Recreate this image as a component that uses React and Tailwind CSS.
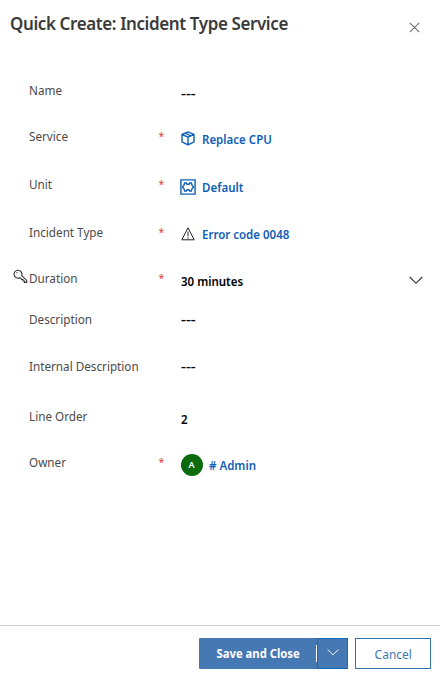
function CubeIcon() {
  return (
    <svg width="14" height="15" viewBox="0 0 14 15" fill="none" stroke="#1160b7" strokeWidth="1.4" strokeLinejoin="round">
      <path d="M7 .9 13 3.3V10.8L7 13.9 1 10.8V3.3ZM1.2 3.5 7 6.2 12.8 3.5M7 6.2V13.6M4.1 2.2 9.9 4.8" />
    </svg>
  );
}

function UnitIcon() {
  return (
    <svg width="16" height="16" viewBox="0 0 16 16" fill="none" stroke="#1160b7" strokeWidth="1.4">
      <path d="M.9.9H15.1V15.1H.9Z" />
      <path d="M4.6 4H6.4L7 5.2H9L9.6 4H11.4L12 6.2 13.6 8 12 9.8 11.4 12H9.6L9 10.8H7L6.4 12H4.6L4 9.8 2.4 8 4 6.2Z" />
    </svg>
  );
}

function WarningIcon() {
  return (
    <svg width="14" height="14" viewBox="0 0 14 14" fill="none" stroke="#222222" strokeWidth="1">
      <path d="M7 .8 13.2 12.8H.8ZM7 4.6V9.4M7 10.4V11.6" />
    </svg>
  );
}

function KeyIcon() {
  return (
    <svg width="15" height="15" viewBox="0 0 15 15" fill="none" stroke="#333333" strokeWidth="1.1">
      <path d="M8.7 6.7 13.7 11.4V13.4H11.5V12H10V10.5H8.6L6.9 8.7A4 4 0 1 1 8.7 6.7Z" />
      <path d="M3.3 3.7H4.5" />
    </svg>
  );
}

function Chevron({ className }) {
  return (
    <svg className={className} width="14" height="9" viewBox="0 0 14 9" fill="none" stroke="currentColor" strokeWidth="1.1">
      <path d="M.8 1 7 7.3 13.2 1" />
    </svg>
  );
}

function Row({ label, height, required, icon, valueClass, children }) {
  return (
    <div className={`flex items-start ${height}`}>
      <div className="flex w-[29px] shrink-0 justify-end pt-[3px] pr-px">{icon}</div>
      <div className="w-[129.5px] shrink-0 text-[13px] leading-6 whitespace-nowrap text-[#4a4a4a]">
        <span className="inline-block origin-left scale-x-90">{label}</span>
      </div>
      <div className="w-[22px] shrink-0 text-[10.5px] leading-6 text-[#e5383c]">{required ? "*" : ""}</div>
      <div className={`flex h-6 flex-1 items-center text-[12.5px] leading-6 font-semibold whitespace-nowrap ${valueClass}`}>{children}</div>
    </div>
  );
}

function Text({ className = "", children }) {
  return <span className={`inline-block origin-left scale-x-[0.92] ${className}`}>{children}</span>;
}

function Empty() {
  return <span className="inline-block origin-left scale-x-[1.22] font-semibold">---</span>;
}

export default function App() {
  return (
    <div className="flex h-[675px] w-[440px] flex-col overflow-hidden bg-white font-['Segoe_UI','Noto_Sans',sans-serif]">
      <header className="flex h-[78px] shrink-0 items-start justify-between pr-[20px] pl-[10px]">
        <h1 className="mt-[9px] origin-left scale-x-[0.942] text-[18px] leading-[28px] font-semibold tracking-[-0.4px] whitespace-nowrap text-[#3b3b3b]">
          Quick Create: Incident Type Service
        </h1>
        <svg className="mt-[22px]" width="11" height="11" viewBox="0 0 11 11" stroke="#707070" strokeWidth="1.1">
          <path d="M.8.8 10.2 10.2M10.2.8.8 10.2" />
        </svg>
      </header>
      <main className="flex-1">
        <Row label="Name" height="h-[46px]" valueClass="mt-[4px] text-black"><Empty /></Row>
        <Row label="Service" height="h-[48px]" required valueClass="mt-[4px] text-[#1160b7]">
          <span className="-mt-[3px]"><CubeIcon /></span><Text className="ml-[7.5px]">Replace CPU</Text>
        </Row>
        <Row label="Unit" height="h-[48px]" required valueClass="mt-[4px] text-[#1160b7]">
          <span className="-mt-[3px] -ml-px"><UnitIcon /></span><Text className="ml-[6.5px]">Default</Text>
        </Row>
        <Row label="Incident Type" height="h-[46px]" required valueClass="mt-[3px] text-[#1160b7]">
          <span className="-mt-[2px]"><WarningIcon /></span><Text className="ml-[7.5px]">Error code 0048</Text>
        </Row>
        <Row label="Duration" height="h-[41px]" required icon={<KeyIcon />} valueClass="mt-[4px] text-black">
          <Text>30 minutes</Text><Chevron className="-mt-[3px] mr-[17px] ml-auto text-[#333333]" />
        </Row>
        <Row label="Description" height="h-[47px]" valueClass="mt-px text-black"><Empty /></Row>
        <Row label="Internal Description" height="h-[50px]" valueClass="mt-px text-black"><Empty /></Row>
        <Row label="Line Order" height="h-[46px]" valueClass="mt-[4px] text-black"><Text>2</Text></Row>
        <Row label="Owner" height="h-[46px]" required valueClass="mt-[4px] text-[#1160b7]">
          <span className="-mt-[2px] flex h-[22px] w-[22px] items-center justify-center rounded-full bg-[#0b6a0b] text-[9px] text-white">A</span>
          <Text className="ml-[6px]"># Admin</Text>
        </Row>
      </main>
      <footer className="flex h-[50px] shrink-0 items-start justify-end border-t border-[#d2d0ce] pt-[12px] pr-[9px]">
        <button className="flex h-[31px] w-[118px] items-center justify-center rounded-l-[1px] bg-[#4678b4] pt-px text-[12.5px] font-bold text-white">
          <span className="inline-block scale-x-[0.9] whitespace-nowrap">Save and Close</span>
        </button>
        <button className="relative flex h-[31px] w-[31px] items-center justify-center border border-[#0f6cbd] bg-[#4678b4] text-white">
          <span className="absolute top-[6px] -left-[2px] h-[17px] w-px bg-white" />
          <Chevron className="-mt-[3px] w-[12px]" />
        </button>
        <button className="ml-[7px] h-[31px] w-[76px] border border-[#3373b3] bg-white pt-[2px] text-[13px] text-[#3c76b2]">
          <span className="inline-block scale-x-[0.92]">Cancel</span>
        </button>
      </footer>
    </div>
  );
}
